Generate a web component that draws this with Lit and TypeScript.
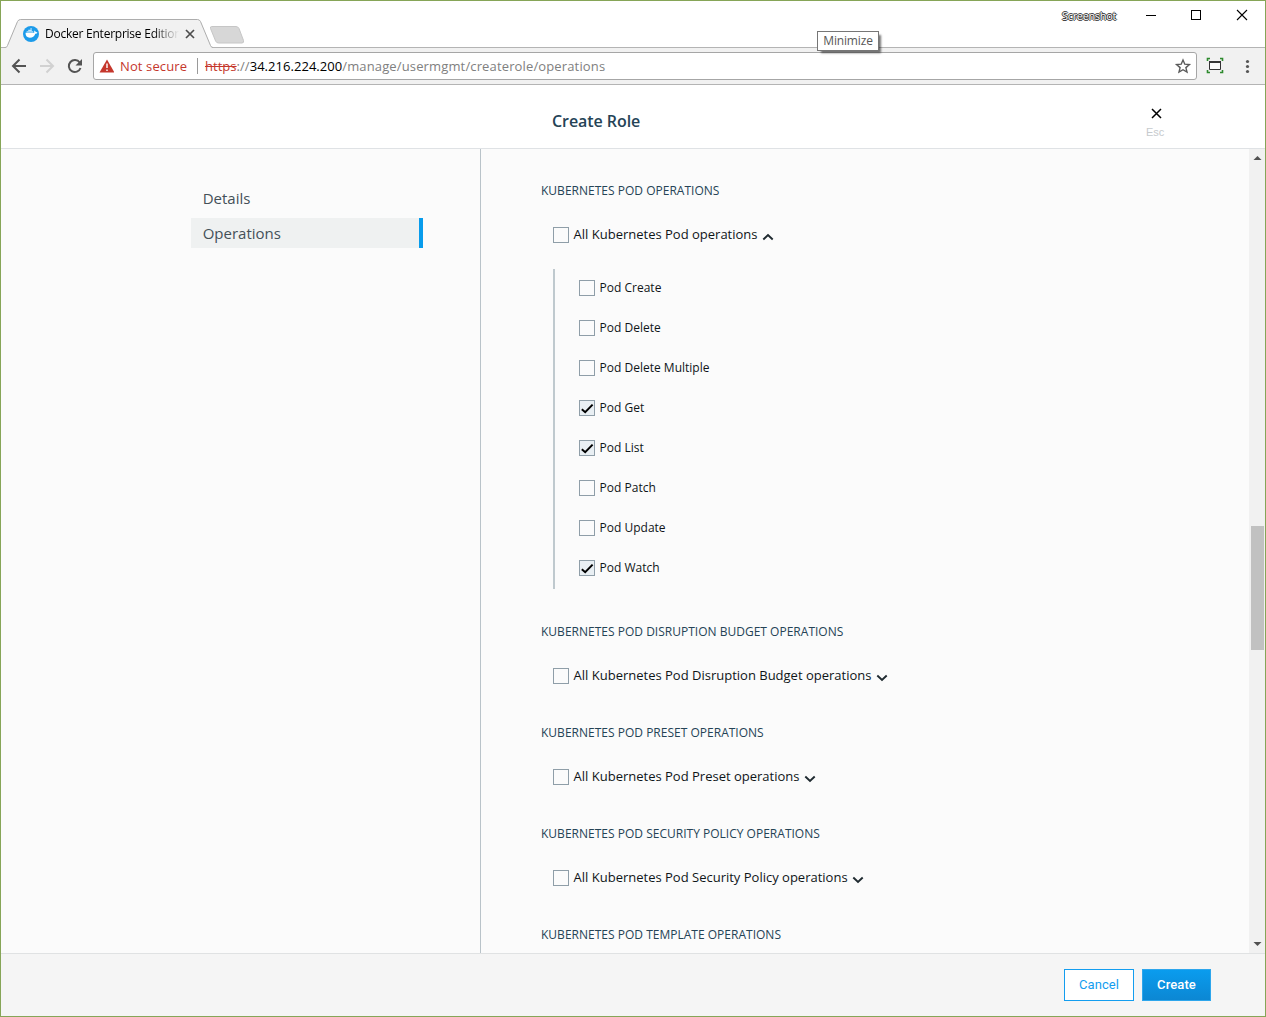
import { LitElement, html, css, svg, nothing } from "lit";
import { customElement, property } from "lit/decorators.js";

interface Operation {
  name: string;
  checked?: boolean;
}

interface OperationGroup {
  kind: string;
  operations?: Operation[];
  titleOnly?: boolean;
}

const GROUPS: OperationGroup[] = [
  {
    kind: "Pod",
    operations: [
      { name: "Pod Create" },
      { name: "Pod Delete" },
      { name: "Pod Delete Multiple" },
      { name: "Pod Get", checked: true },
      { name: "Pod List", checked: true },
      { name: "Pod Patch" },
      { name: "Pod Update" },
      { name: "Pod Watch", checked: true },
    ],
  },
  { kind: "Pod Disruption Budget" },
  { kind: "Pod Preset" },
  { kind: "Pod Security Policy" },
  { kind: "Pod Template", titleOnly: true },
];

@customElement("browser-chrome")
export class BrowserChrome extends LitElement {
  static styles = css`
    :host {
      display: block;
      font-family: "Open Sans", "Noto Sans", sans-serif;
      color: #000;
    }
    svg {
      display: block;
      flex: none;
    }
    .titlebar {
      position: relative;
      display: flex;
      height: 46px;
      background: #fff;
      border-bottom: 1px solid #b4b4b4;
    }
    .tab {
      position: relative;
      width: 216px;
      height: 47px;
      flex: none;
    }
    .shape {
      position: absolute;
      left: 0;
      top: 0;
    }
    .tab-content {
      position: relative;
      display: flex;
      align-items: center;
      padding: 24px 0 0 22px;
      height: 18px;
    }
    .tab-title {
      width: 136px;
      margin-left: 6px;
      white-space: nowrap;
      font-size: 12px;
      line-height: 18px;
      letter-spacing: -0.24px;
      -webkit-mask-image: linear-gradient(90deg, #000 108px, transparent 134px);
      mask-image: linear-gradient(90deg, #000 108px, transparent 134px);
    }
    .newtab {
      margin: 25px 0 0 -8px;
    }
    .window {
      display: flex;
      margin-left: auto;
      height: 30px;
      align-items: center;
    }
    .caption {
      font-size: 11px;
      line-height: 14px;
      letter-spacing: -0.35px;
      color: #fff;
      margin-right: 30px;
      text-shadow: 1px 0 0 #333, -1px 0 0 #333, 0 1px 0 #333, 0 -1px 0 #333;
    }
    .tooltip {
      position: absolute;
      left: 816px;
      top: 30px;
      width: 60px;
      height: 18px;
      border: 1px solid #767676;
      background: #fff;
      box-shadow: 3px 3px 2px -1px rgba(0, 0, 0, 0.55);
      color: #575757;
      font-size: 12px;
      line-height: 18px;
      letter-spacing: -0.15px;
      text-align: center;
      z-index: 2;
    }
    .toolbar {
      display: flex;
      align-items: center;
      height: 36px;
      background: #f1f1f1;
      border-bottom: 1px solid #b4b4b4;
    }
    .omnibox {
      box-sizing: border-box;
      display: flex;
      align-items: center;
      width: 1104px;
      height: 28px;
      border: 1px solid #a6a6a6;
      border-radius: 3px;
      background: #fff;
      font-size: 13px;
      white-space: nowrap;
    }
    .insecure {
      width: 67px;
      margin-left: 6px;
      color: #c5372c;
      letter-spacing: 0.12px;
    }
    .sep {
      width: 1px;
      height: 16px;
      margin: 0 7px 0 10px;
      background: #9a9a9a;
    }
    .url {
      flex: 1;
      color: #808080;
      letter-spacing: 0.04px;
    }
    .scheme {
      color: #c5372c;
      text-decoration: line-through;
    }
    .host {
      color: #000;
    }
    .path {
      letter-spacing: 0.14px;
    }
  `;

  render() {
    return html`
      <div class="titlebar">
        <div class="tab">
          <svg class="shape" width="216" height="47" viewBox="1 1 216 47">
            <path d="M4.5 48C6.500 48 7 47 7.500 45.500L17.500 21.500Q18.500 19.500 20.500 19.500H197.500Q199.500 19.500 200.500 21.500L210.500 45.500Q211.300 47.500 213 48Z" fill="#f1f1f1"/>
            <path d="M4.500 47.500C6.500 47.500 7 46.700 7.500 45.500L17.500 21.500Q18.500 19.500 20.500 19.500H197.500Q199.500 19.500 200.500 21.500L210.500 45.500Q211.300 47.500 213 47.500" fill="none" stroke="#adadad"/>
          </svg>
          <div class="tab-content">
            <svg width="16" height="16" viewBox="0 0 16 16">
              <circle cx="8" cy="8" r="8" fill="#1c9bea"/>
              <path d="M2.500 6.800h8.800q-.4-1.300.3-2.300 1 .6 1.100 1.600 1.100-.1 1.800.3-.5 1.200-2.200 1.300Q11 11.700 6.800 11.700 2.600 11.700 2.500 6.800Z" fill="#fff"/>
              <path d="M3.600 5.200h6.600v1.400H3.600zM5.200 3.700h3.600v1.200H5.200zM7.400 2.200h1.400v1.200H7.400z" fill="#c4e6fb"/>
            </svg>
            <span class="tab-title">Docker Enterprise Edition</span>
            <svg width="18" height="12" viewBox="0 0 18 12">
              <path d="M5 2l8 8M13 2l-8 8" stroke="#4d4d4d" stroke-width="1.700"/>
            </svg>
          </div>
        </div>
        <svg class="newtab" width="36" height="18" viewBox="0 0 36 18">
          <path d="M2.500.5H27Q29 .500 30 2.500L34.500 14.500Q35 17 33 17H9.500Q7.500 17 6.600 15L1.500 2.500Q1 .500 2.500.5Z" fill="#d7d7d7" stroke="#c6c6c6"/>
        </svg>
        <div class="window">
          <span class="caption">Screenshot</span>
          <svg width="119" height="30" viewBox="1145 0 119 30" shape-rendering="crispEdges">
            <path d="M1145 14.500h10" stroke="#000"/>
            <rect x="1190.500" y="9.500" width="9" height="9" fill="none" stroke="#000"/>
            <path d="M1236 9l10 10M1246 9l-10 10" stroke="#000" shape-rendering="auto" stroke-width="1.100"/>
          </svg>
        </div>
        <div class="tooltip">Minimize</div>
      </div>
      <div class="toolbar">
        <svg width="92" height="36" viewBox="1 48 92 36" fill="none" stroke-width="2">
          <path d="M26 66H13.500M19.500 59.500L13 66l6.500 6.500" stroke="#545454"/>
          <path d="M40 66H52.500M46.500 59.500L53 66l-6.500 6.500" stroke="#d1d1d1"/>
          <path d="M79.700 62.500A6 6 0 1 0 80.500 68" stroke="#545454"/>
          <path d="M82 59v6.500h-6.500z" fill="#545454"/>
        </svg>
        <div class="omnibox">
          <svg width="20" height="26" viewBox="94 53 20 26">
            <path d="M107 59.500L114.500 72.500H99.500Z" fill="#c5372c"/>
            <path d="M107 63.500v4.500M107 69.500v1.500" stroke="#fff" stroke-width="1.400"/>
          </svg>
          <span class="insecure">Not secure</span>
          <span class="sep"></span>
          <span class="url"><span class="scheme">https</span>://<span class="host">34.216.224.200</span><span class="path">/manage/usermgmt/createrole/operations</span></span>
          <svg width="26" height="26" viewBox="1170 53 26 26">
            <path d="M1183 60l1.800 4.200 4.600.4-3.500 3 1.100 4.500-4-2.400-4 2.400 1.100-4.500-3.500-3 4.600-.4z" fill="none" stroke="#5a5a5a" stroke-width="1.400"/>
          </svg>
        </div>
        <svg width="68" height="36" viewBox="1197 48 68 36">
          <path d="M1207.500 61v-2.500h2.500M1220 58.500h2.500v2.500M1222.500 70v2.500h-2.500M1210 72.500h-2.500v-2.500" fill="none" stroke="#2e8b2e" stroke-width="1.600"/>
          <path d="M1209.500 62v7.500h11v-7.500" fill="#f8f8f8" stroke="#333"/>
          <path d="M1209 61h12v2h-12z" fill="#333"/>
          <g fill="#555"><circle cx="1247.500" cy="61.500" r="1.600"/><circle cx="1247.500" cy="66.500" r="1.600"/><circle cx="1247.500" cy="71.500" r="1.600"/></g>
        </svg>
      </div>
    `;
  }
}

@customElement("operation-check")
export class OperationCheck extends LitElement {
  @property() label = "";
  @property({ type: Boolean }) checked = false;

  static styles = css`
    :host {
      display: flex;
      align-items: center;
      white-space: nowrap;
      color: #0f1518;
    }
    .box {
      box-sizing: border-box;
      width: 16px;
      height: 16px;
      flex: none;
      border: 1px solid #8f9ea8;
    }
    .checked {
      background: #e9eff3;
    }
    .tick {
      display: block;
      width: 14px;
      height: 14px;
    }
    .label {
      margin: var(--label-shift, -2px) 0 0 4.6px;
    }
  `;

  render() {
    return html`
      <span class="box ${this.checked ? "checked" : ""}">
        ${this.checked
          ? html`<svg class="tick" viewBox="0 0 14 14">
              <path d="M1.800 8.200L5.200 11.200 12.600 3.600" fill="none" stroke="#000" stroke-width="2"/>
            </svg>`
          : nothing}
      </span>
      <span class="label">${this.label}</span>
    `;
  }
}

@customElement("operation-group")
export class OperationGroupElement extends LitElement {
  @property({ attribute: false }) group!: OperationGroup;

  static styles = css`
    :host {
      display: block;
      padding-bottom: 33px;
    }
    .title {
      height: 20px;
      line-height: 20px;
      font-size: 12px;
      letter-spacing: 0.01px;
      text-transform: uppercase;
      color: #254356;
      white-space: nowrap;
    }
    .all {
      display: flex;
      align-items: center;
      height: 20px;
      margin: 24px 0 4px 12px;
      font-size: 13px;
      line-height: 20px;
    }
    .arrow {
      margin: 3px 0 0 4.500px;
    }
    .list {
      margin: 24px 0 0 12px;
      padding-left: 24px;
      border-left: 2px solid #bfc9ce;
    }
    .item {
      --label-shift: 0;
      height: 38px;
      padding-bottom: 2px;
      font-size: 12px;
      line-height: 20px;
    }
  `;

  render() {
    const { kind, operations, titleOnly } = this.group;
    return html`
      <div class="title">Kubernetes ${kind} Operations</div>
      ${titleOnly
        ? nothing
        : html`<div class="all">
            <operation-check label="All Kubernetes ${kind} operations"></operation-check>
            <svg class="arrow" width="12" height="8" viewBox="0 0 12 8">
              ${operations
                ? svg`<path d="M1.300 6.500L6 2l4.700 4.500" fill="none" stroke="#1f2a30" stroke-width="1.900"/>`
                : svg`<path d="M1.300 1.500L6 6l4.700-4.500" fill="none" stroke="#1f2a30" stroke-width="1.900"/>`}
            </svg>
          </div>`}
      ${operations
        ? html`<div class="list">
            ${operations.map(
              (op) => html`<operation-check class="item" .label=${op.name} .checked=${!!op.checked}></operation-check>`,
            )}
          </div>`
        : nothing}
    `;
  }
}

@customElement("app-root")
export class AppRoot extends LitElement {
  static styles = css`
    :host {
      display: block;
    }
    .frame {
      box-sizing: border-box;
      display: flex;
      flex-direction: column;
      width: 1266px;
      height: 1017px;
      border: 1px solid #86a557;
      background: #fbfbfb;
      font-family: "Open Sans", "Noto Sans", sans-serif;
      overflow: hidden;
    }
    .header {
      display: grid;
      grid-template-columns: 551px 1fr 124px;
      height: 63px;
      background: #fff;
      border-bottom: 1px solid #dfe2e5;
    }
    .heading {
      grid-column: 2;
      margin: 0;
      padding-top: 25px;
      font-size: 16px;
      line-height: 22px;
      font-weight: 600;
      letter-spacing: -0.06px;
      color: #254356;
    }
    .close {
      padding: 23px 0 0 5px;
      font-family: "Liberation Sans", sans-serif;
      font-size: 11px;
      line-height: 14px;
      color: #c6cacd;
    }
    .close-icon {
      display: block;
      margin: 0 0 6px 5px;
    }
    .body {
      display: flex;
      height: 804px;
    }
    .nav {
      box-sizing: border-box;
      width: 480px;
      padding: 34px 57px 0 190px;
      border-right: 1px solid #b9c3c9;
      font-size: 15px;
      color: #445058;
    }
    .nav-item {
      height: 30px;
      margin-bottom: 5px;
      padding-left: 11.700px;
      line-height: 30px;
    }
    .current {
      background: #eff1f1;
      border-right: 4px solid #089cec;
    }
    .content {
      flex: 1;
      padding: 32px 0 0 60px;
      box-sizing: border-box;
      overflow: hidden;
    }
    .scrollbar {
      display: flex;
      flex-direction: column;
      align-items: center;
      width: 16px;
      background: #f1f1f1;
    }
    .thumb {
      width: 13px;
      height: 124px;
      margin: 360px 0 auto;
      background: #c1c1c1;
    }
    .footer {
      display: flex;
      justify-content: flex-end;
      gap: 8px;
      height: 47px;
      padding: 15px 54px 0 0;
      background: #f5f5f5;
      border-top: 1px solid #e0e2e3;
    }
    .button {
      box-sizing: border-box;
      width: 70px;
      height: 32px;
      padding: 0;
      border: 1px solid #139def;
      background: #fff;
      color: #139def;
      font: 13px/30px Roboto, sans-serif;
      letter-spacing: 0.1px;
    }
    .primary {
      width: 69px;
      border-color: #2ea6ec;
      background: linear-gradient(#0a9cee, #0c87d3);
      color: #fff;
      font-weight: 500;
    }
  `;

  render() {
    return html`
      <div class="frame">
        <browser-chrome></browser-chrome>
        <div class="header">
          <h1 class="heading">Create Role</h1>
          <div class="close">
            <svg class="close-icon" width="11" height="11" viewBox="0 0 11 11">
              <path d="M1 1l9 9M10 1l-9 9" stroke="#000" stroke-width="1.500"/>
            </svg>
            Esc
          </div>
        </div>
        <div class="body">
          <div class="nav">
            <div class="nav-item">Details</div>
            <div class="nav-item current">Operations</div>
          </div>
          <div class="content">
            ${GROUPS.map((group) => html`<operation-group .group=${group}></operation-group>`)}
          </div>
          <div class="scrollbar">
            <svg width="16" height="17" viewBox="0 0 16 17"><path d="M4.500 11L8.500 7l4 4z" fill="#505050"/></svg>
            <div class="thumb"></div>
            <svg width="16" height="17" viewBox="0 0 16 17"><path d="M4.500 6h8L8.500 10z" fill="#505050"/></svg>
          </div>
        </div>
        <div class="footer">
          <button class="button">Cancel</button>
          <button class="button primary">Create</button>
        </div>
      </div>
    `;
  }
}
